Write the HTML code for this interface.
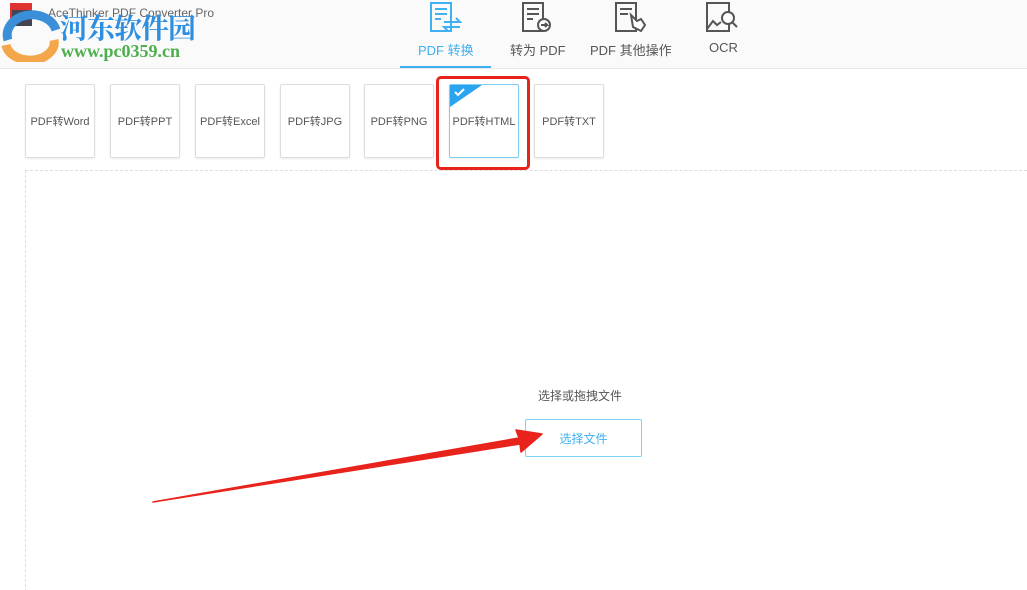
<!DOCTYPE html>
<html><head><meta charset="utf-8"><style>
html,body{margin:0;width:1027px;height:590px;overflow:hidden}
body{background:#fff;position:relative;font-family:"Liberation Sans","Noto Sans CJK SC",sans-serif}
.hdr{position:absolute;left:0;top:0;width:1027px;height:68px;background:#fafafa;border-bottom:1px solid #e8e8e8}
.tab{position:absolute;top:40px;font-size:13px;color:#555;text-align:center}
.card{position:absolute;top:84px;width:68px;height:72px;border:1px solid #ddd;border-radius:2px;font-size:11px;color:#555;display:flex;align-items:center;justify-content:center;background:#fff;box-shadow:0 1px 2px rgba(0,0,0,.08)}
</style></head><body>
<div class="hdr"></div>
<div style="position:absolute;left:48px;top:6px;font-size:12px;color:#666">AceThinker PDF Converter Pro</div>
<svg style="position:absolute;left:0;top:0" width="60" height="62"><rect x="10" y="3" width="22" height="20" fill="#d33"/><rect x="12" y="10" width="20" height="16" fill="#445"/><path d="M8 40a22 18 0 0 1 48-10" stroke="#3a8fd8" stroke-width="9" fill="none"/><path d="M6 45a22 16 0 0 0 48-5" stroke="#f3a64a" stroke-width="9" fill="none"/></svg>
<div style="position:absolute;left:60px;top:7px;font-size:28px;font-weight:bold;color:#2e8fe0;font-family:'Liberation Serif','Noto Serif CJK SC',serif;letter-spacing:-1px">河东软件园</div>
<div style="position:absolute;left:61px;top:41px;font-size:18px;font-weight:bold;color:#4cae4c;font-family:'Liberation Serif',serif">www.pc0359.cn</div>
<svg style="position:absolute;left:428px;top:1px" width="36" height="34" fill="none" stroke="#3fb0f0" stroke-width="2"><path d="M3 2h20v28H3z"/><path d="M7 8h12M7 13h12M7 18h6"/><path d="M16 21h16l-4-4M32 26H16l4 4"/></svg>
<svg style="position:absolute;left:520px;top:1px" width="36" height="34" fill="none" stroke="#555" stroke-width="2"><path d="M3 2h20v28H3z"/><path d="M7 8h12M7 13h12M7 18h6"/><circle cx="24" cy="24" r="6" fill="#fff"/><path d="M21 24h6l-2-2M27 24l-2 2"/></svg>
<svg style="position:absolute;left:613px;top:1px" width="36" height="34" fill="none" stroke="#555" stroke-width="2"><path d="M3 2h20v28H3z"/><path d="M7 8h12M7 13h8"/><path d="M18 14l6 6 4-2 4 6-4 6-8-4z" fill="#fff"/></svg>
<svg style="position:absolute;left:704px;top:1px" width="36" height="34" fill="none" stroke="#555" stroke-width="2"><path d="M3 2h22v28H3z"/><path d="M3 28l6-8 4 4 4-3"/><circle cx="24" cy="17" r="6" fill="#fff"/><path d="M28 21l5 5"/></svg>
<div class="tab" style="left:418px;color:#3fb0f0">PDF 转换</div>
<div class="tab" style="left:510px">转为 PDF</div>
<div class="tab" style="left:590px">PDF 其他操作</div>
<div class="tab" style="left:709px">OCR</div>
<div style="position:absolute;left:400px;top:66px;width:91px;height:2px;background:#3fb0f0"></div>
<div class="card" style="left:25px">PDF转Word</div>
<div class="card" style="left:110px">PDF转PPT</div>
<div class="card" style="left:195px">PDF转Excel</div>
<div class="card" style="left:280px">PDF转JPG</div>
<div class="card" style="left:364px">PDF转PNG</div>
<div class="card" style="left:449px;border-color:#7dd0f5;overflow:hidden">PDF转HTML<svg style="position:absolute;left:0;top:0" width="32" height="22"><path d="M0 0h32L0 22z" fill="#2ba4f0"/><path d="M5 7l3 3 6-6" stroke="#fff" stroke-width="2" fill="none"/></svg></div>
<div class="card" style="left:534px">PDF转TXT</div>
<div style="position:absolute;left:436px;top:76px;width:88px;height:88px;border:3px solid #e8231c;border-radius:5px"></div>
<div style="position:absolute;left:25px;top:170px;width:1010px;height:440px;border:1px dashed #ddd"></div>
<div style="position:absolute;left:538px;top:387px;font-size:12px;color:#555">选择或拖拽文件</div>
<div style="position:absolute;left:525px;top:419px;width:115px;height:36px;border:1.5px solid #7dd0f5;border-radius:2px;font-size:12px;color:#3fb0f0;display:flex;align-items:center;justify-content:center">选择文件</div>
<svg style="position:absolute;left:0;top:0" width="1027" height="590"><path d="M153 502L519 438l-3-8 26 4-21 18-1-8L153 502z" fill="#e8231c" stroke="#e8231c" stroke-width="1.5" stroke-linejoin="round"/></svg>
</body></html>
